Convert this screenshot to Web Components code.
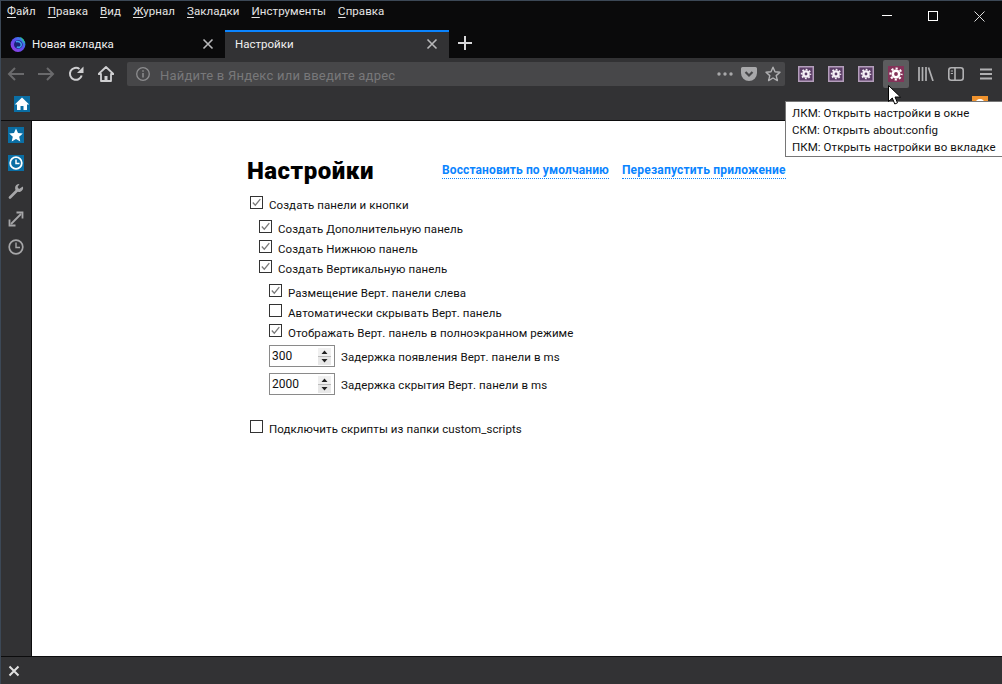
<!DOCTYPE html>
<html lang="ru"><head><meta charset="utf-8"><title>Настройки</title>
<style>
html,body{margin:0;height:100%;overflow:hidden;background:#000}
body{font:11.5px Roboto,"Liberation Sans",sans-serif}
</style></head><body>
<app-window>
  <menu-bar slot="top"></menu-bar>
  <tab-strip slot="top"></tab-strip>
  <nav-bar slot="top"></nav-bar>
  <book-bar slot="top"></book-bar>
  <side-bar slot="side"></side-bar>
  <settings-page slot="main"></settings-page>
  <find-bar slot="bottom"></find-bar>
  <tool-tip slot="over">
    <div>ЛКМ: Открыть настройки в окне</div>
    <div>СКМ: Открыть about:config</div>
    <div>ПКМ: Открыть настройки во вкладке</div>
  </tool-tip>
  <mouse-cursor slot="over"></mouse-cursor>
</app-window>
<script>
function el(name, html, css){
  customElements.define(name, class extends HTMLElement{
    constructor(){super();this.attachShadow({mode:'open'}).innerHTML='<style>'+css+'</style>'+html;}
  });
}
const gear=(c,r1,w1,r2,w2)=>`<g fill="none" stroke="${c}"><circle cx="8" cy="8" r="${r1}" stroke-width="${w1}"/><circle cx="8" cy="8" r="${r2}" stroke-width="${w2}" stroke-dasharray="${(2*Math.PI*r2/16).toFixed(3)}" stroke-dashoffset="${(Math.PI*r2/16).toFixed(3)}"/></g>`;
const svg=(w,h,inner,vb)=>`<svg width="${w}" height="${h}" viewBox="${vb||`0 0 ${w} ${h}`}">${inner}</svg>`;
const ic='#b1b1b3', dim='#6a6a6c';
const framed=svg(16,16,`<rect x=".75" y=".75" width="14.500" height="14.500" fill="#5d3f68" stroke="#b49ebc" stroke-width="1.500"/>${gear('#f4f0f5',2.6,2.4,4.5,1.5)}`);

el('app-window',`
<div class="win">
  <slot name="top"></slot>
  <div class="mid"><slot name="side"></slot><slot name="main"></slot></div>
  <slot name="bottom"></slot>
  <slot name="over"></slot>
</div>`,`
:host{display:block;width:1002px;height:684px;position:relative;overflow:hidden}
.win{height:100%;box-sizing:border-box;display:flex;flex-direction:column;border-left:1px solid #3c4856;border-top:1px solid #3c4856;background:#323234}
.mid{flex:1;display:flex;min-height:0}
`);

el('menu-bar',`
<nav>
<span><u>Ф</u>айл</span><span><u>П</u>равка</span><span><u>В</u>ид</span><span><u>Ж</u>урнал</span><span><u>З</u>акладки</span><span><u>И</u>нструменты</span><span><u>С</u>правка</span>
</nav>
<div class="caps">
  <svg width="10" height="10"><path d="M0 4.500H10" stroke="#fff"/></svg>
  <svg width="10" height="10"><rect x=".5" y=".5" width="9" height="9" fill="none" stroke="#fff"/></svg>
  <svg width="11" height="11"><path d="M.5 .5L10.500 10.500M10.500 .5L.5 10.500" stroke="#ddd"/></svg>
</div>`,`
:host{display:flex;height:29px;background:#0a0a0b;color:#e4e4e4;justify-content:space-between;align-items:flex-start;flex:none}
nav{display:flex;gap:12px;padding:2px 0 0 6px;line-height:17px;letter-spacing:.06px}
u{text-underline-offset:2px;text-decoration-thickness:1px}
.caps{display:flex;gap:36px;align-items:center;padding:10px 17px 0 0;height:10px}
.caps svg{display:block}
`);

el('tab-item',`
<slot name="icon"></slot><span class="t"><slot></slot></span>
<svg class="x" width="12" height="12"><path d="M1.500 1.500L10.500 10.500M10.500 1.500L1.500 10.500" stroke="#b8b8ba" stroke-width="1.600"/></svg>`,`
:host{display:flex;align-items:center;width:224px;box-sizing:border-box;padding:0 11px 0 9px;gap:6px;color:#f0f0f0;height:28px}
:host([active]){background:#323234;border-top:2px solid #0a84ff;padding-bottom:2px;padding-left:10px}
.t{flex:1}
`);

el('tab-strip',`
<tab-item><svg slot="icon" width="16" height="16" viewBox="0 0 16 16"><defs><linearGradient id="f" x1="0" y1="1" x2="1" y2="0"><stop offset="0" stop-color="#a03ae0"/><stop offset=".55" stop-color="#5a50f0"/><stop offset="1" stop-color="#18a8e8"/></linearGradient></defs><circle cx="8" cy="8.500" r="7.400" fill="url(#f)"/><path d="M10 .8C13 2.300 15 5 14.800 8L12.500 4.500Z" fill="#2cc48c"/><circle cx="8.300" cy="8.500" r="4.300" fill="#1a2478"/><path d="M6 5.800C9 4.800 11.500 6.500 11.300 9 11 11.200 8.500 12 6.800 10.800" fill="none" stroke="#3fa0f0" stroke-width="1.500"/></svg>Новая вкладка</tab-item>
<tab-item active>Настройки</tab-item>
<svg class="plus" width="14" height="14"><path d="M7 0V14M0 7H14" stroke="#d8d8da" stroke-width="2"/></svg>`,`
:host{display:flex;height:28px;background:#0a0a0b;flex:none;align-items:center}
tab-item:first-child{width:225px}
.plus{margin-left:9px;margin-top:-2px}
`);

el('url-bar',`
<svg width="16" height="16" viewBox="0 0 16 16"><circle cx="8" cy="8" r="6.300" fill="none" stroke="#8d8d8f" stroke-width="1.300"/><path d="M8 4.200v1.600M8 7v4.500" stroke="#8d8d8f" stroke-width="1.500"/></svg>
<span class="ph">Найдите в Яндекс или введите адрес</span>
<svg class="dots" width="16" height="4"><g fill="#a8a8aa"><circle cx="2" cy="2" r="1.700"/><circle cx="8" cy="2" r="1.700"/><circle cx="14" cy="2" r="1.700"/></g></svg>
<svg width="16" height="14" viewBox="0 0 16 14"><path d="M1.500 0H14.500A1.500 1.500 0 0 1 16 1.500V6A8 8 0 0 1 0 6V1.500A1.500 1.500 0 0 1 1.500 0Z" fill="#a8a8aa"/><path d="M4.500 5L8 8.500 11.500 5" fill="none" stroke="#474749" stroke-width="2.200"/></svg>
<svg width="16" height="16" viewBox="0 0 16 16"><path d="M8 1.200L10 5.800 15 6.300 11.200 9.600 12.400 14.600 8 12 3.600 14.600 4.800 9.600 1 6.300 6 5.800Z" fill="none" stroke="#b1b1b3" stroke-width="1.400" stroke-linejoin="round"/></svg>`,`
:host{display:flex;align-items:center;flex:none;width:658px;height:24px;box-sizing:border-box;background:#474749;border-radius:2px;padding:0 4px 0 8px;margin-left:4px}
.ph{flex:1;margin-left:9px;padding-top:2px;color:#78787a;font-size:13px;letter-spacing:.22px}
.dots{margin-right:8px}
svg+svg{margin-left:8px}
.dots+svg{margin-left:0}
`);

el('tool-btn',`<slot></slot>`,`
:host{display:flex;width:26px;height:28px;align-items:center;justify-content:center;border-radius:2px;margin-right:4px;flex:none}
:host([hover]){background:#5c5c5e}
`);

el('nav-bar',`
<div class="l">
<tool-btn>${svg(18,16,`<path d="M17 8H2M8 2L2 8L8 14" fill="none" stroke="${dim}" stroke-width="2"/>`)}</tool-btn>
<tool-btn>${svg(18,16,`<path d="M1 8H16M10 2L16 8L10 14" fill="none" stroke="${dim}" stroke-width="2"/>`)}</tool-btn>
<tool-btn>${svg(16,16,`<path d="M13.700 9.500A6 6 0 1 1 11.500 3" fill="none" stroke="#cfcfd1" stroke-width="2"/><path d="M15.500 .5V7H9Z" fill="#cfcfd1"/>`)}</tool-btn>
<tool-btn>${svg(16,16,`<path d="M8 1L.5 8H3V15H13V8H15.500Z" fill="none" stroke="#cfcfd1" stroke-width="1.800" stroke-linejoin="round"/><rect x="6.500" y="10" width="3" height="5" fill="#cfcfd1"/>`)}</tool-btn>
</div>
<url-bar></url-bar>
<div class="r">
<tool-btn>${framed}</tool-btn>
<tool-btn>${framed}</tool-btn>
<tool-btn>${framed}</tool-btn>
<tool-btn hover>${svg(16,16,`<rect width="16" height="16" fill="#843359"/>${gear('#fff',3.2,2.6,5.6,2)}`)}</tool-btn>
<tool-btn>${svg(16,14,`<path d="M1 0V14M4.500 0V14M8 0V14M10.500 .5L15 14" fill="none" stroke="${ic}" stroke-width="1.700"/>`)}</tool-btn>
<tool-btn>${svg(16,14,`<rect x=".8" y=".8" width="14.400" height="12.400" rx="2.500" fill="none" stroke="${ic}" stroke-width="1.600"/><path d="M7 1V13" stroke="${ic}" stroke-width="1.600"/><path d="M2.800 4H5M2.800 6.500H5" stroke="${ic}"/>`)}</tool-btn>
<tool-btn>${svg(14,12,`<path d="M1 1.500H13M1 6H13M1 10.500H13" stroke="${ic}" stroke-width="1.800"/>`)}</tool-btn>
</div>`,`
:host{display:flex;align-items:center;height:34px;flex:none;box-sizing:border-box;background:#323234;padding:0 0 2px 2px}
.l,.r{display:flex;align-items:center}
.r{margin-left:8px}
`);

el('book-bar',`
<svg width="16" height="16"><rect width="16" height="16" fill="#0a6ea4"/><path d="M8 1.500L.8 8.500H3V14H6.500V10H9.500V14H13V8.500H15.200Z" fill="#fff"/></svg>
<svg class="rss" width="16" height="9"><rect width="16" height="9" fill="#f0932e"/><circle cx="8" cy="8" r="4" fill="none" stroke="#fff" stroke-width="2"/></svg>`,`
:host{display:flex;justify-content:space-between;align-items:flex-start;height:29px;flex:none;box-sizing:border-box;background:#323234;padding:4px 14px 0 13px;border-bottom:1px solid #0c0c0d}
svg{display:block}
`);

el('side-bar',`
<svg width="16" height="16"><rect width="16" height="16" fill="#0a6ea4"/><path d="M8 1.500L10 6 14.800 6.500 11.200 9.700 12.300 14.500 8 12 3.700 14.500 4.800 9.700 1.200 6.500 6 6Z" fill="#fff"/></svg>
<svg width="16" height="16"><rect width="16" height="16" fill="#0a6ea4"/><circle cx="8" cy="8" r="5.800" fill="none" stroke="#fff" stroke-width="1.800"/><path d="M8 4.500V8.500H11.500" fill="none" stroke="#fff" stroke-width="1.500"/></svg>
<svg width="16" height="16"><path d="M2 14.500L9 7.500" stroke="#a6a6a8" stroke-width="2.600" stroke-linecap="round"/><path d="M14.800 3.500A4 4 0 1 1 11.500 1L9.500 4 11 6Z" fill="#a6a6a8"/></svg>
<svg width="16" height="16"><path d="M3 13L13 3" stroke="#a6a6a8" stroke-width="1.800"/><path d="M8.500 1.500H14.500V7.500M1.500 8.500V14.500H7.500" fill="none" stroke="#a6a6a8" stroke-width="1.800"/></svg>
<svg width="16" height="16"><circle cx="8" cy="8" r="6.800" fill="none" stroke="#a6a6a8" stroke-width="1.700"/><path d="M8 3.500V8.500H12" fill="none" stroke="#a6a6a8" stroke-width="1.400"/></svg>`,`
:host{display:flex;flex-direction:column;align-items:center;gap:12px;width:31px;flex:none;box-sizing:border-box;padding-top:6px;padding-right:1px;background:#323234;border-right:1px solid #0c0c0d}
svg{display:block}
`);

el('check-row',`
<span class="box"><svg width="13" height="13"><rect x=".5" y=".5" width="12" height="12" fill="#fff" stroke="#333"/><path class="m" d="M2.800 6.500L5.300 9.200 10.300 3.200" fill="none" stroke="#7a7a7a" stroke-width="1.300"/></svg></span><span class="l"><slot></slot></span>`,`
:host{display:flex;align-items:flex-start;height:20px;color:#111}
:host(:not([checked])) .m{display:none}
.box{width:13px;height:13px}
svg{display:block}
.l{line-height:17px;margin:1px 0 0 6px;letter-spacing:.08px}
:host([lvl="0"]){padding-left:2px}
:host([lvl="1"]){padding-left:11px}
:host([lvl="2"]){padding-left:21px}
`);

el('num-row',`
<span class="in"><span class="v"><slot name="v"></slot></span>
<span class="sp"><svg width="13" height="17"><rect width="13" height="17" fill="#e8e8e8"/><rect width="13" height="8" fill="#f0f0f0"/><path d="M6.500 2.500L9.500 6H3.500Z M3.500 11H9.500L6.500 14.500Z" fill="#222"/><path d="M0 8.500H13" stroke="#bbb"/></svg></span></span>
<span class="l"><slot></slot></span>`,`
:host{display:flex;align-items:center;height:22px;padding-left:21px;color:#111}
.in{display:flex;align-items:center;justify-content:space-between;width:66px;height:22px;box-sizing:border-box;border:1px solid #8a8a8a;padding:0 3px 0 2px;background:#fff;font-size:12px}
.sp{display:block;height:17px}
svg{display:block}
.l{margin:2px 0 0 6px;letter-spacing:.08px}
`);

el('settings-page',`
<header><h1>Настройки</h1><a>Восстановить по умолчанию</a><a class="b">Перезапустить приложение</a></header>
<check-row lvl="0" checked style="margin-bottom:4px">Создать панели и кнопки</check-row>
<check-row lvl="1" checked>Создать Дополнительную панель</check-row>
<check-row lvl="1" checked>Создать Нижнюю панель</check-row>
<check-row lvl="1" checked style="margin-bottom:4px">Создать Вертикальную панель</check-row>
<check-row lvl="2" checked>Размещение Верт. панели слева</check-row>
<check-row lvl="2">Автоматически скрывать Верт. панель</check-row>
<check-row lvl="2" checked>Отображать Верт. панель в полноэкранном режиме</check-row>
<num-row style="margin-top:1px"><span slot="v">300</span>Задержка появления Верт. панели в ms</num-row>
<num-row style="margin-top:6px"><span slot="v">2000</span>Задержка скрытия Верт. панели в ms</num-row>
<check-row lvl="0" style="margin-top:25px">Подключить скрипты из папки custom_scripts</check-row>`,`
:host{display:block;flex:1;background:#fff;padding:35px 0 0 216px;box-sizing:border-box;min-width:0}
header{display:flex;align-items:flex-start;height:40px;margin-left:-1px}
h1{font:900 24px/30px Roboto,"Liberation Sans",sans-serif;margin:0;color:#000;width:195px;letter-spacing:.5px}
a{color:#0a84ff;font-weight:700;font-size:12px;border-bottom:1px dotted #0a84ff;line-height:15px;margin:7px 13px 0 0;cursor:pointer;letter-spacing:.12px}
a.b{letter-spacing:.2px}
`);

el('find-bar',`<svg width="12" height="12"><path d="M1.500 1.500L10.500 10.500M10.500 1.500L1.500 10.500" stroke="#e0e0e0" stroke-width="2"/></svg>`,`
:host{display:flex;align-items:center;height:28px;flex:none;box-sizing:border-box;padding-left:7px;background:#323234;border-top:1px solid #0c0c0d}
`);

el('tool-tip',`<slot></slot>`,`
:host{position:absolute;left:785px;top:101px;width:217px;height:56px;box-sizing:border-box;background:#fff;border:1px solid #767676;border-right:0;padding:3px 0 0 6px;color:#111;line-height:17px;white-space:nowrap;letter-spacing:.06px}
`);

el('mouse-cursor',`<svg width="14" height="20" viewBox="0 0 14 20"><path d="M.5 .5V16.500L4.300 13 6.800 19 9.500 17.800 7 12H12.500Z" fill="#fff" stroke="#000"/></svg>`,`
:host{position:absolute;left:888px;top:85px;display:block;width:14px;height:20px}
svg{display:block}
`);
</script>
</body></html>
